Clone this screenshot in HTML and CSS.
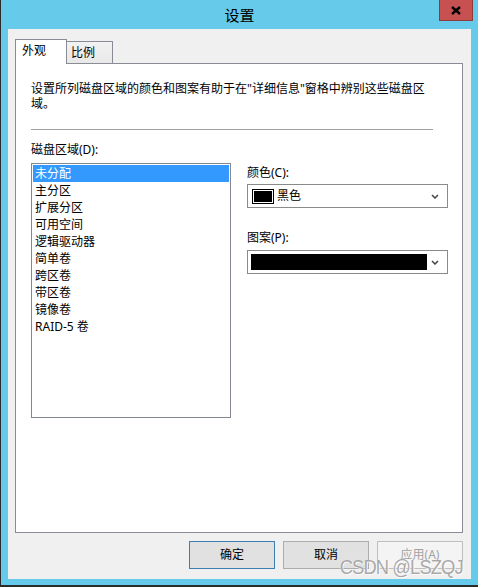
FILE: index.html
```html
<!DOCTYPE html>
<html lang="zh-CN">
<head>
    <meta charset="UTF-8">
    <title>设置</title>
    <link rel="stylesheet" href="styles.css">
</head>
<body>
    <div class="window">
        <div class="titlebar">
            <span class="title">设置</span>
            <button class="close" aria-label="关闭">
                <svg width="10" height="9" viewBox="0 0 10 9"><path d="M1 1 L9 8 M9 1 L1 8" stroke="#000" stroke-width="2.4" fill="none"/></svg>
            </button>
        </div>

        <div class="client">
            <div class="tabs">
                <div class="tab active">外观</div>
                <div class="tab">比例</div>
            </div>

            <div class="page">
                <p class="desc">设置所列磁盘区域的颜色和图案有助于在"详细信息"窗格中辨别这些磁盘区域。</p>
                <div class="sep"></div>

                <div class="areas">
                    <div class="area-label">磁盘区域(D):</div>
                    <div></div>
                    <ul class="list">
                        <li class="selected">未分配</li>
                        <li>主分区</li>
                        <li>扩展分区</li>
                        <li>可用空间</li>
                        <li>逻辑驱动器</li>
                        <li>简单卷</li>
                        <li>跨区卷</li>
                        <li>带区卷</li>
                        <li>镜像卷</li>
                        <li>RAID-5 卷</li>
                    </ul>

                    <div class="props">
                        <div class="field-label">颜色(C):</div>
                        <div class="combo">
                            <span class="swatch"></span>
                            <span class="combo-text">黑色</span>
                            <svg class="chevron" width="8" height="5" viewBox="0 0 8 5"><path d="M1 1 L4 4 L7 1" stroke="#444" stroke-width="1.5" fill="none"/></svg>
                        </div>

                        <div class="field-label second">图案(P):</div>
                        <div class="combo">
                            <span class="pattern"></span>
                            <svg class="chevron" width="8" height="5" viewBox="0 0 8 5"><path d="M1 1 L4 4 L7 1" stroke="#444" stroke-width="1.5" fill="none"/></svg>
                        </div>
                    </div>
                </div>
            </div>

            <div class="buttons">
                <button class="btn default">确定</button>
                <button class="btn">取消</button>
                <button class="btn disabled">应用(A)</button>
            </div>
        </div>

        <div class="watermark">CSDN @LSZQJ</div>
    </div>
</body>
</html>
```

FILE: styles.css
```css
:root {
    --frame-color: #66cbea;
    --frame-edge: #2b2b2b;
    --client-bg: #f0f0f0;
    --tab-border: #898c95;
    --list-border: #828790;
    --highlight: #3399ff;
}
* {
    box-sizing: border-box;
}
body {
    margin: 0;
    font-family: "Noto Sans", "Noto Sans CJK SC", sans-serif;
    font-size: 12px;
    color: #000;
}
.window {
    position: relative;
    width: 478px;
    height: 587px;
    background: var(--frame-color);
    border-left: 1px solid var(--frame-edge);
    border-bottom: 2px solid var(--frame-edge);
    display: flex;
    flex-direction: column;
}
.titlebar {
    height: 29px;
    display: grid;
    grid-template-columns: 1fr auto 1fr;
}
.title {
    grid-column: 2;
    font-size: 15px;
    line-height: 30px;
}
.close {
    grid-column: 3;
    justify-self: end;
    align-self: start;
    width: 34px;
    height: 21px;
    margin-right: 5px;
    padding: 0;
    background: #c75050;
    border: 1px solid #8e3a3a;
    border-top: none;
    display: flex;
    align-items: center;
    justify-content: center;
}
.client {
    flex: 1;
    margin: 0 7px 6px 7px;
    padding: 10px 8px 10px 7px;
    background: var(--client-bg);
    display: flex;
    flex-direction: column;
}
.tabs {
    display: flex;
    align-items: flex-end;
    height: 24px;
}
.tab {
    width: 46px;
    height: 22px;
    padding: 3px 0 0 4px;
    line-height: 16px;
    background: linear-gradient(#f2f2f2, #e8e8e8);
    border-top: 1px solid var(--tab-border);
    border-right: 1px solid var(--tab-border);
}
.tab.active {
    position: relative;
    z-index: 1;
    width: 52px;
    height: 25px;
    margin-bottom: -1px;
    padding-left: 6px;
    background: #fff;
    border-left: 1px solid var(--tab-border);
}
.page {
    flex: 1;
    background: #fff;
    border: 1px solid var(--tab-border);
    padding: 17px 0 0 15px;
}
.desc {
    margin: 0;
    width: 402px;
    line-height: 15px;
}
.sep {
    width: 402px;
    margin-top: 18px;
    border-top: 1px solid #a0a0a0;
}
.areas {
    display: grid;
    grid-template-columns: 200px 201px;
    column-gap: 16px;
}
.area-label {
    margin: 12px 0 5px;
    line-height: 16px;
}
.list {
    list-style: none;
    margin: 0;
    padding: 1px;
    width: 200px;
    height: 255px;
    border: 1px solid var(--list-border);
}
.list li {
    height: 17px;
    line-height: 17px;
    padding-left: 2px;
}
.list li.selected {
    background: var(--highlight);
    color: #fff;
}
.props {
    padding-top: 2px;
}
.field-label {
    line-height: 16px;
    margin-bottom: 3px;
}
.field-label.second {
    margin-top: 22px;
    margin-bottom: 4px;
}
.combo {
    width: 201px;
    height: 24px;
    border: 1px solid #8a8a8a;
    display: flex;
    align-items: center;
    padding: 0 8px 0 4px;
}
.swatch {
    width: 22px;
    height: 15px;
    background: #000;
    border: 1px solid #000;
    box-shadow: inset 0 0 0 1px #fff;
}
.combo-text {
    margin-left: 3px;
    line-height: 16px;
}
.pattern {
    width: 176px;
    height: 16px;
    margin-left: -1px;
    background: #000;
}
.chevron {
    margin-left: auto;
}
.buttons {
    display: flex;
    justify-content: flex-end;
    gap: 8px;
    margin-top: 8px;
}
.btn {
    width: 86px;
    height: 28px;
    font-family: inherit;
    font-size: 12px;
    line-height: 12px;
    background: #e1e1e1;
    border: 1px solid #adadad;
    color: #000;
    padding: 0;
}
.btn.default {
    border-color: #3c7fb1;
}
.btn.disabled {
    background: #f4f4f4;
    border-color: #bfbfbf;
    color: #a3a3a3;
}
.watermark {
    position: absolute;
    right: 15px;
    bottom: 12px;
    font-family: "Liberation Sans", sans-serif;
    font-size: 20px;
    line-height: 12px;
    letter-spacing: -1px;
    transform: scaleX(0.92);
    transform-origin: right center;
    color: rgba(140, 140, 140, 0.75);
    text-shadow: 0 0 1px #fff, 1px 1px 0 rgba(255, 255, 255, 0.8);
}
```
